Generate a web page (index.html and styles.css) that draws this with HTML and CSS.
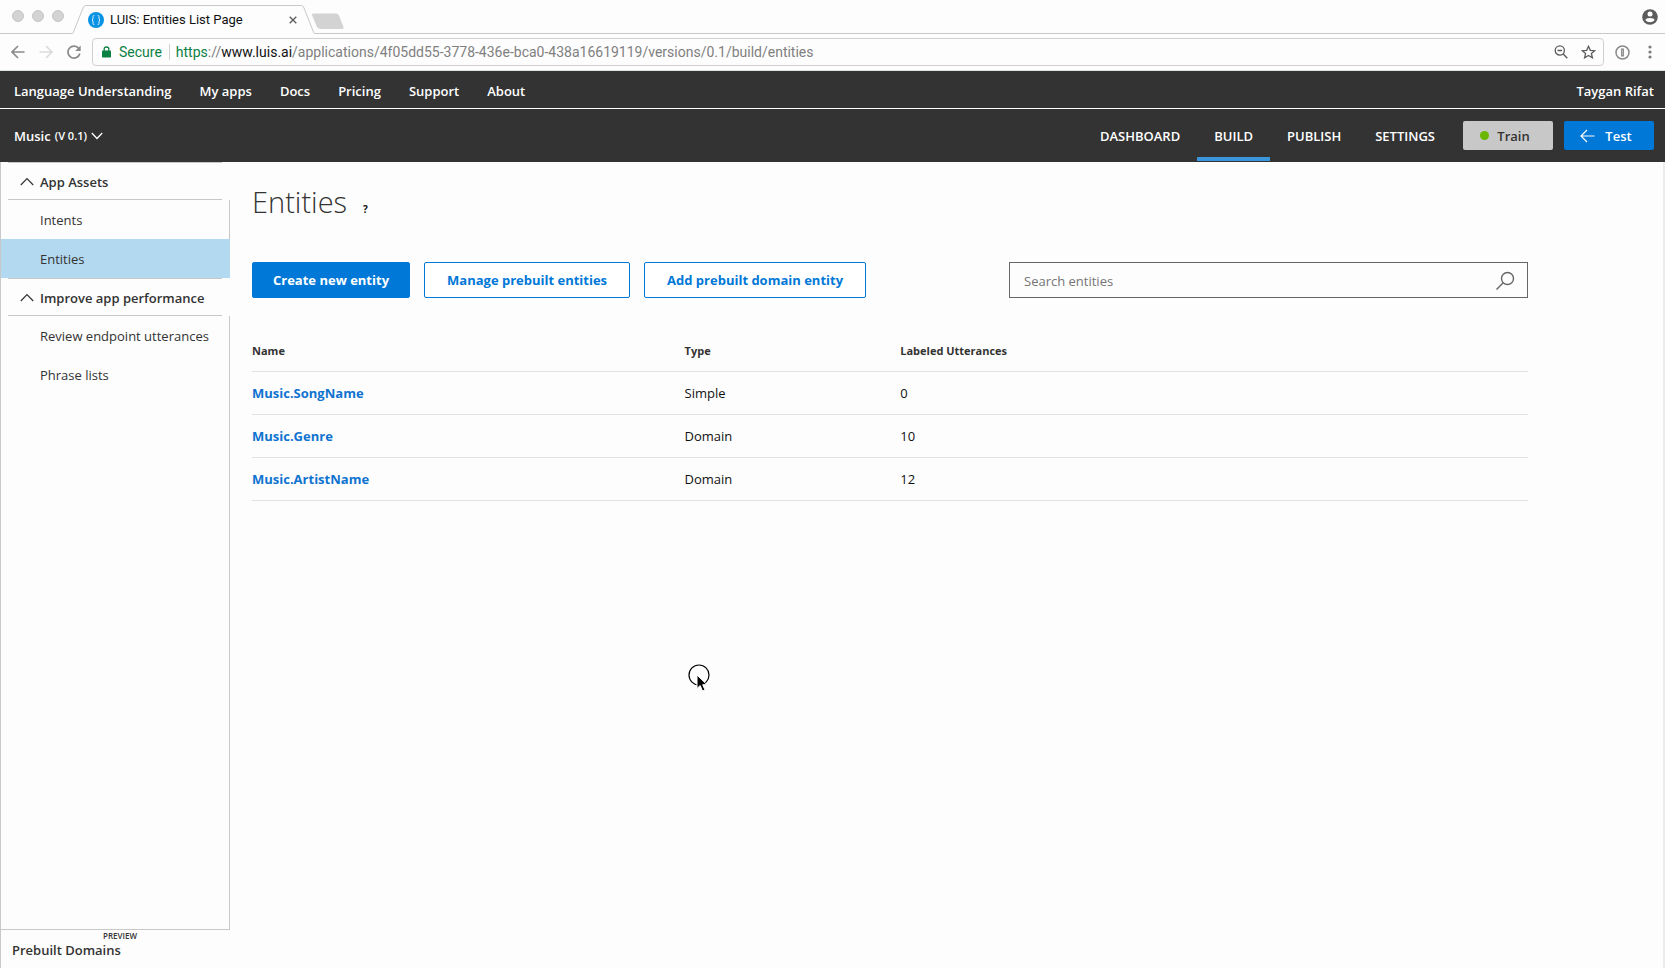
FILE: index.html
```
<!DOCTYPE html>
<html lang="en">
<head>
    <meta charset="UTF-8">
    <meta name="viewport" content="width=device-width, initial-scale=1.0">
    <title>LUIS: Entities List Page</title>
    <link rel="stylesheet" href="styles.css">
</head>
<body>
<!-- Browser window -->
<div class="tab-strip">
    <div class="window-dots">
        <span></span>
        <span></span>
        <span></span>
    </div>
    <div class="tab">
        <svg class="tab-edge" width="14" height="29" viewBox="0 0 14 29">
            <path d="M0 28.5 C1 28.5 1 28 1.5 27 L11 3 C12 1 12.500 .5 14 .5 V29 H0 Z" fill="#fdfdfd"/>
            <path d="M0 28.5 C1 28.5 1 28 1.5 27 L11 3 C12 1 12.500 .5 14 .5" fill="none" stroke="#c8c8c8"/>
        </svg>
        <div class="tab-body">
            <svg width="16" height="16" viewBox="0 0 16 16">
                <circle cx="8" cy="8" r="8" fill="#0a93e2"/>
                <path d="M6.300 3.500 H5.800 Q5 3.500 5 4.500 V7 L4 8 L5 9 V11.500 Q5 12.500 5.800 12.500 H6.300 M9.700 3.500 H10.200 Q11 3.500 11 4.500 V7 L12 8 L11 9 V11.500 Q11 12.500 10.200 12.500 H9.700" fill="none" stroke="#d3edfb"/>
            </svg>
            <span class="tab-title">LUIS: Entities List Page</span>
            <button class="icon-button" aria-label="Close tab">
                <svg width="8" height="8" viewBox="0 0 8 8"><path d="M.7 .7 L7.300 7.300 M7.300 .7 L.7 7.300" stroke="#5a5a5a" stroke-width="1.300"/></svg>
            </button>
        </div>
        <svg class="tab-edge" width="14" height="29" viewBox="0 0 14 29">
            <path d="M0 .5 C1.500 .5 2 1 3 3 L12.500 27 C13 28 13 28.500 14 28.500 V29 H0 Z" fill="#fdfdfd"/>
            <path d="M0 .5 C1.500 .5 2 1 3 3 L12.500 27 C13 28 13 28.500 14 28.500" fill="none" stroke="#c8c8c8"/>
        </svg>
    </div>
    <button class="icon-button new-tab" aria-label="New tab">
        <svg width="34" height="17" viewBox="0 0 34 17"><path d="M2 .5 H25 Q27 .5 28 2.500 L32.500 14 Q33 16 31 16 H10 Q7 16 6 14 L1 2 Q.5 .5 2 .5 Z" fill="#d3d3d3"/></svg>
    </button>
    <button class="icon-button profile" aria-label="Profile">
        <svg width="16" height="16" viewBox="0 0 16 16">
            <circle cx="8" cy="8" r="7.800" fill="#5c5c5c"/>
            <circle cx="8" cy="5" r="2.500" fill="#fff"/>
            <path d="M3.300 11 Q4 8.900 8 8.900 Q12 8.900 12.700 11 Q11 13.300 8 13.300 Q5 13.300 3.300 11 Z" fill="#fff"/>
        </svg>
    </button>
</div>

<div class="toolbar">
    <div class="history">
        <button class="icon-button" aria-label="Back">
            <svg width="14" height="14" viewBox="0 0 14 14"><path d="M13.500 7 H1.500 M7 1 L1 7 L7 13" fill="none" stroke="#8a8a8a" stroke-width="1.600"/></svg>
        </button>
        <button class="icon-button" aria-label="Forward">
            <svg width="14" height="14" viewBox="0 0 14 14"><path d="M.5 7 H12.500 M7 1 L13 7 L7 13" fill="none" stroke="#dcdcdc" stroke-width="1.600"/></svg>
        </button>
        <button class="icon-button" aria-label="Reload">
            <svg width="14" height="14" viewBox="0 0 14 14">
                <path d="M11.800 3.500 A6 6 0 1 0 12.800 8.500" fill="none" stroke="#8a8a8a" stroke-width="1.700"/>
                <path d="M13.700 .5 V6 H8.200 Z" fill="#8a8a8a"/>
            </svg>
        </button>
    </div>
    <div class="address">
        <svg width="9" height="12" viewBox="0 0 9 12">
            <rect x="0" y="4.500" width="9" height="7" rx=".8" fill="#0b8043"/>
            <path d="M2.200 5 V3 Q2.200 1 4.500 1 Q6.800 1 6.800 3 V5" fill="none" stroke="#0b8043" stroke-width="1.300"/>
        </svg>
        <span class="secure">Secure</span>
        <span class="url"><span class="scheme">https</span>://<span class="host">www.luis.ai</span>/applications/4f05dd55-3778-436e-bca0-438a16619119/versions/0.1/build/entities</span>
        <button class="icon-button" aria-label="Zoom">
            <svg width="14" height="14" viewBox="0 0 14 14">
                <circle cx="5.800" cy="5.500" r="4.600" fill="none" stroke="#5c5c5c" stroke-width="1.300"/>
                <path d="M3.500 5.500 H8.100 M9.200 9 L13.300 13.200" stroke="#5c5c5c" stroke-width="1.400"/>
            </svg>
        </button>
        <button class="icon-button" aria-label="Bookmark">
            <svg width="15" height="14" viewBox="0 0 15 14"><path d="M7.500 1.300 L9.300 5.300 L13.700 5.700 L10.400 8.500 L11.400 12.800 L7.500 10.500 L3.600 12.800 L4.600 8.500 L1.300 5.700 L5.700 5.300 Z" fill="none" stroke="#5c5c5c" stroke-width="1.300"/></svg>
        </button>
    </div>
    <div class="extensions">
        <button class="icon-button" aria-label="Password manager">
            <svg width="15" height="15" viewBox="0 0 15 15">
                <circle cx="7.500" cy="7.500" r="6.500" fill="none" stroke="#8a8a8a" stroke-width="1.500"/>
                <rect x="6" y="3.500" width="3" height="8" fill="#8f8f8f"/>
                <path d="M7.500 5 V10" stroke="#b8b8b8"/>
            </svg>
        </button>
        <button class="icon-button" aria-label="Menu">
            <svg width="4" height="14" viewBox="0 0 4 14" fill="#7d7d7d"><circle cx="2" cy="2" r="1.600"/><circle cx="2" cy="7" r="1.600"/><circle cx="2" cy="12" r="1.600"/></svg>
        </button>
    </div>
</div>

<!-- Site navigation -->
<nav class="site-nav">
    <a href="#">Language Understanding</a>
    <a href="#">My apps</a>
    <a href="#">Docs</a>
    <a href="#">Pricing</a>
    <a href="#">Support</a>
    <a href="#">About</a>
    <a href="#" class="user">Taygan Rifat</a>
</nav>

<!-- App navigation -->
<header class="app-bar">
    <button class="app-switch">
        Music <small>(V 0.1)</small>
        <svg width="12" height="8" viewBox="0 0 12 8"><path d="M.8 1 L6 6.500 L11.200 1" fill="none" stroke="#fff" stroke-width="1.300"/></svg>
    </button>
    <nav class="app-tabs">
        <a href="#">DASHBOARD</a>
        <a href="#" class="active">BUILD</a>
        <a href="#">PUBLISH</a>
        <a href="#">SETTINGS</a>
    </nav>
    <div class="app-actions">
        <button class="train"><span class="status"></span>Train</button>
        <button class="test">
            <svg width="15" height="14" viewBox="0 0 15 14"><path d="M14.500 7 H1 M7 1 L1 7 L7 13" fill="none" stroke="#fff" stroke-width="1.200"/></svg>
            Test
        </button>
    </div>
</header>

<div class="page">
    <aside class="sidebar">
        <h2>
            <svg width="14" height="9" viewBox="0 0 14 9"><path d="M.8 8 L7 1.500 L13.200 8" fill="none" stroke="#333" stroke-width="1.200"/></svg>
            App Assets
        </h2>
        <ul>
            <li><a href="#">Intents</a></li>
            <li><a href="#" class="active">Entities</a></li>
        </ul>
        <h2>
            <svg width="14" height="9" viewBox="0 0 14 9"><path d="M.8 8 L7 1.500 L13.200 8" fill="none" stroke="#333" stroke-width="1.200"/></svg>
            Improve app performance
        </h2>
        <ul class="fill">
            <li><a href="#">Review endpoint utterances</a></li>
            <li><a href="#">Phrase lists</a></li>
        </ul>
        <a href="#" class="prebuilt"><sup>PREVIEW</sup>Prebuilt Domains</a>
    </aside>

    <main class="content">
        <div class="title">
            <h1>Entities</h1>
            <button class="help">?</button>
        </div>

        <div class="actions">
            <button class="primary">Create new entity</button>
            <button class="secondary">Manage prebuilt entities</button>
            <button class="secondary">Add prebuilt domain entity</button>
            <div class="search">
                <input type="text" placeholder="Search entities" aria-label="Search entities">
                <svg width="20" height="20" viewBox="0 0 20 20"><circle cx="12.500" cy="7.500" r="6" fill="none" stroke="#666" stroke-width="1.400"/><path d="M8.200 11.800 L1.500 18.500" stroke="#666" stroke-width="1.400"/></svg>
            </div>
        </div>

        <table class="entities">
            <thead>
            <tr>
                <th class="col-name">Name</th>
                <th class="col-type">Type</th>
                <th>Labeled Utterances</th>
            </tr>
            </thead>
            <tbody>
            <tr>
                <td><a href="#">Music.SongName</a></td>
                <td>Simple</td>
                <td>0</td>
            </tr>
            <tr>
                <td><a href="#">Music.Genre</a></td>
                <td>Domain</td>
                <td>10</td>
            </tr>
            <tr>
                <td><a href="#">Music.ArtistName</a></td>
                <td>Domain</td>
                <td>12</td>
            </tr>
            </tbody>
        </table>
    </main>
</div>

<!-- Mouse pointer with click ring -->
<svg class="pointer" width="26" height="30" viewBox="0 0 26 30">
    <circle cx="11" cy="11" r="10" fill="none" stroke="#000" stroke-width="1.200"/>
    <path d="M9 11 V24.500 L12.200 21.500 L14.500 27 L17 26 L14.700 20.700 H19 Z" fill="#000" stroke="#fff"/>
</svg>
</body>
</html>
```
FILE: styles.css
```
* {
    box-sizing: border-box;
}

body {
    position: relative;
    display: flex;
    flex-direction: column;
    min-height: 100vh;
    margin: 0;
    background-color: #fdfdfd;
    color: #333;
    font-family: "Open Sans", "Noto Sans", sans-serif;
    font-size: 13px;
    line-height: 20px;
}

a {
    color: inherit;
    text-decoration: none;
}

button {
    font: inherit;
    cursor: pointer;
}

svg {
    flex: none;
}

.icon-button {
    display: flex;
    padding: 0;
    border: none;
    background: none;
}

/* Browser window */
.tab-strip {
    display: flex;
    height: 34px;
    padding: 0 7px 0 12px;
    box-shadow: inset 0 -1px #c8c8c8;
    font-family: Roboto, "Liberation Sans", sans-serif;
}

.window-dots {
    display: flex;
    gap: 8px;
    padding-top: 10px;
}

.window-dots span {
    width: 12px;
    height: 12px;
    border: 1px solid #c6c6c6;
    border-radius: 50%;
    background-color: #d3d3d3;
}

.tab {
    display: flex;
    width: 243px;
    height: 29px;
    margin: 5px 0 0 8px;
}

.tab-body {
    display: flex;
    flex: 1;
    align-items: center;
    height: 29px;
    padding: 0 4px 0 2px;
    border-top: 1px solid #c8c8c8;
    background-color: #fdfdfd;
    color: #111;
}

.tab-title {
    flex: 1;
    margin-left: 6px;
}

.new-tab {
    align-self: center;
    margin-left: -4px;
    padding-top: 8px;
}

.profile {
    align-self: center;
    margin-left: auto;
}

.toolbar {
    display: flex;
    align-items: center;
    gap: 11px;
    height: 37px;
    padding: 0 13px 0 11px;
    border-bottom: 1px solid #dde3de;
}

.history {
    display: flex;
    gap: 14px;
}

.extensions {
    display: flex;
    align-items: center;
    gap: 18px;
}

.address {
    display: flex;
    flex: 1;
    align-items: center;
    height: 28px;
    padding: 0 7px 0 9px;
    border: 1px solid #cfcfcf;
    border-radius: 4px;
    font-family: Roboto, "Liberation Sans", sans-serif;
    font-size: 14px;
}

.secure {
    margin: 0 6px 0 8px;
    padding-right: 7px;
    border-right: 1px solid #d0d0d0;
    line-height: 16px;
    color: #0b8043;
}

.url {
    flex: 1;
    color: #808080;
}

.scheme {
    color: #0b8043;
}

.host {
    color: #111;
}

.address .icon-button {
    margin-left: 13px;
}

/* Site navigation */
.site-nav {
    display: flex;
    gap: 28px;
    height: 38px;
    padding: 10px 11px 0 14px;
    border-bottom: 1px solid #fff;
    background-color: #333;
    color: #fff;
    font-weight: 600;
}

.user {
    margin-left: auto;
}

/* App navigation */
.app-bar {
    display: flex;
    height: 53px;
    padding: 0 11px 0 14px;
    background-color: #333;
    color: #fff;
    font-weight: 600;
}

.app-switch {
    display: flex;
    align-items: center;
    gap: 4px;
    padding: 0;
    border: none;
    background: none;
    color: #fff;
}

.app-switch small {
    font-size: 11px;
}

.app-tabs {
    display: flex;
    margin-left: auto;
}

.app-tabs a {
    height: 52px;
    padding: 17px 17px 0;
}

.app-tabs .active {
    border-bottom: 4px solid #3a96dd;
}

.app-actions {
    display: flex;
    gap: 11px;
    padding: 12px 0 12px 11px;
}

.app-actions button {
    display: flex;
    align-items: center;
    justify-content: center;
    width: 90px;
    padding: 0 12px 0 6px;
    border: none;
    border-radius: 2px;
}

.train {
    gap: 8px;
    background-color: #c8c8c8;
    color: #333;
}

.status {
    width: 9px;
    height: 9px;
    border-radius: 50%;
    background-color: #6bb700;
}

.test {
    gap: 10px;
    background-color: #0078d7;
    color: #fff;
}

/* Page */
.page {
    display: flex;
    flex: 1;
    border-right: 2px solid #ececec;
    border-left: 1px solid #c8c8c8;
}

.sidebar {
    display: flex;
    flex-direction: column;
    width: 229px;
}

.sidebar h2 {
    display: flex;
    align-items: center;
    gap: 6px;
    height: 38px;
    margin: 0 8px 0 7px;
    padding: 1px 0 0 12px;
    border-top: 1px solid #c8c8c8;
    border-bottom: 1px solid #c8c8c8;
    font-size: 13px;
    font-weight: 600;
}

.sidebar ul {
    margin: 0;
    padding: 0;
    border-right: 1px solid #c8c8c8;
    list-style: none;
}

.sidebar .fill {
    flex: 1;
    border-bottom: 1px solid #c8c8c8;
}

.sidebar li a {
    display: block;
    height: 39px;
    padding: 10px 0 0 39px;
}

.sidebar .active {
    margin-right: -1px;
    background-color: #b3d9f1;
}

.prebuilt {
    display: flex;
    flex-direction: column;
    padding: 2px 0 8px 11px;
    font-weight: 600;
}

.prebuilt sup {
    padding-left: 91px;
    font-size: 8px;
    line-height: 8px;
}

.content {
    flex: 1;
    padding: 20px 135px 0 22px;
}

.title {
    display: flex;
    align-items: baseline;
    gap: 16px;
}

h1 {
    margin: 0;
    font-size: 29px;
    font-weight: 300;
    line-height: 40px;
}

.help {
    padding: 0;
    border: none;
    background: none;
    color: #111;
    font-size: 10px;
    font-weight: 700;
}

.actions {
    display: flex;
    align-items: center;
    margin-top: 40px;
}

.actions button {
    height: 36px;
    margin-right: 14px;
    border: 1px solid #0078d7;
    border-radius: 2px;
    font-weight: 700;
}

.primary {
    padding: 0 20px;
    background-color: #0078d7;
    color: #fff;
}

.secondary {
    padding: 0 22px;
    background-color: #fff;
    color: #0078d7;
}

.search {
    display: flex;
    align-items: center;
    width: 519px;
    height: 36px;
    margin-left: auto;
    padding: 2px 12px 0 14px;
    border: 1px solid #666;
}

.search input {
    flex: 1;
    border: none;
    outline: none;
    padding: 0;
    background: none;
    font: inherit;
}

.search input::placeholder {
    color: #757575;
    opacity: 1;
}

.entities {
    width: 100%;
    margin-top: 32px;
    border-collapse: collapse;
    color: #111;
}

.entities th {
    height: 41px;
    padding: 2px 0 0;
    border-bottom: 1px solid #e2e2e2;
    color: #333;
    font-size: 11px;
    font-weight: 700;
    text-align: left;
}

.entities td {
    height: 43px;
    padding: 0;
    border-bottom: 1px solid #e2e2e2;
}

.entities td a {
    color: #0f73d0;
    font-weight: 700;
}

.col-name {
    width: 33.9%;
}

.col-type {
    width: 16.9%;
}

/* Floats over the page */
.pointer {
    position: absolute;
    top: 664px;
    left: 688px;
}
```
